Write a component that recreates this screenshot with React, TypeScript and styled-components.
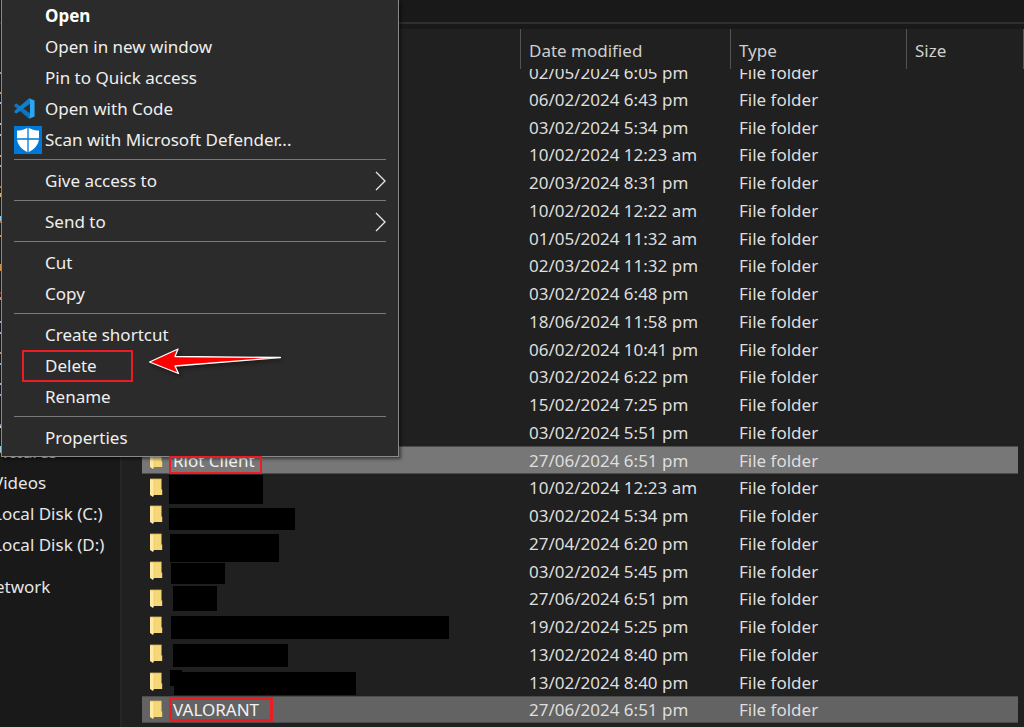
import React from 'react';
import styled, { createGlobalStyle, css } from 'styled-components';

const GlobalStyle = createGlobalStyle`
  *, *::before, *::after { box-sizing: border-box; }
  html, body, #root { min-height: 100vh; }
  body {
    margin: 0;
    background: #202020;
    color: #dedede;
    font-family: "Noto Sans", "Open Sans", sans-serif;
    font-size: 17px;
    line-height: 28px;
    overflow: hidden;
  }
`;

const Window = styled.div`
  position: relative;
  min-height: 100vh;
  display: flex;
  flex-direction: column;
  overflow: hidden;
`;

const Toolbar = styled.header`
  height: 29px;
  padding-top: 22px;
  background: #191919;
`;

const ToolbarLine = styled.div`
  height: 2px;
  background: #2f2f2f;
`;

const Body = styled.div`
  flex: 1;
  display: flex;
`;

const NavPane = styled.nav`
  flex: none;
  width: 122px;
  padding-top: 407px;
  background: #191919;
  border-right: 2px solid #262626;
  overflow: hidden;
`;

const NavLink = styled.a<{ $root?: boolean }>`
  display: block;
  height: 31px;
  line-height: 31px;
  margin-left: ${(p) => (p.$root ? -18 : -7)}px;
  margin-top: ${(p) => (p.$root ? 11 : 0)}px;
  color: #e6e6e6;
  text-decoration: none;
  white-space: nowrap;
`;

const NavIconEdges = styled.svg`
  position: absolute;
  left: 0;
  top: 0;
`;

const FilePane = styled.main`
  flex: 1;
  min-width: 0;
  padding-left: 20px;
`;

const FileTable = styled.table`
  width: 100%;
  table-layout: fixed;
  border-collapse: separate;
  border-spacing: 0;
`;

const Column = styled.col<{ $w?: number }>`
  width: ${(p) => (p.$w ? `${p.$w}px` : 'auto')};
`;

const HeadCell = styled.th<{ $open?: boolean }>`
  height: 40px;
  padding: 4px 0 0 8px;
  border-right: ${(p) => (p.$open ? '0' : '1px solid #535353')};
  text-align: left;
  font-weight: 400;
  color: #cfcfcf;

  &:last-child { padding: 0; }
`;

const Cell = styled.td`
  padding: 0 0 0 8px;
  white-space: nowrap;
  &:last-child { padding: 0; }
`;

const NameCell = styled(Cell)`
  padding: 0;
`;

const Row = styled.tr<{ $tone?: string }>`
  height: 28px;
  line-height: 27px;
  &:nth-child(4n) { height: 27px; }
  ${(p) =>
    p.$tone &&
    css`
      ${Cell}:not(:last-child) {
        background: ${p.$tone};
        box-shadow: inset 0 1px #4c4c4c, inset 0 -1px #4c4c4c;
      }
    `}
`;

const ClippedRow = styled.tr`
  height: 16px;
`;

const ClippedText = styled.div`
  height: 16px;
  line-height: 24px;
  display: flex;
  align-items: flex-end;
  overflow: hidden;
`;

const NameLine = styled.div`
  position: relative;
  display: flex;
  align-items: center;
  height: 27px;
  gap: 10px;
  padding-left: 7px;
  color: #f2f2f2;
`;

const Redaction = styled.span<{ $x: number; $y: number; $w: number; $h: number }>`
  position: absolute;
  left: ${(p) => p.$x}px;
  top: ${(p) => p.$y}px;
  width: ${(p) => p.$w}px;
  height: ${(p) => p.$h}px;
  background: #000;
`;

const Highlight = styled.span<{ $x: number; $y: number; $w: number; $h: number; $thick?: boolean }>`
  position: absolute;
  z-index: 3;
  left: ${(p) => p.$x}px;
  top: ${(p) => p.$y}px;
  width: ${(p) => p.$w}px;
  height: ${(p) => p.$h}px;
  border: ${(p) => (p.$thick ? 3 : 2)}px solid #ed1c24;
`;

const Menu = styled.div`
  position: absolute;
  z-index: 2;
  top: 0;
  left: 1px;
  width: 398px;
  padding: 0 12px 3px;
  background: #2b2b2b;
  border: 1px solid #8a8a8a;
  border-top: 0;
  box-shadow: 2px 2px 3px rgba(0, 0, 0, 0.5);
`;

const MenuItem = styled.button<{ $strong?: boolean }>`
  position: relative;
  display: flex;
  align-items: center;
  width: 100%;
  height: 31px;
  padding: 0;
  border: 0;
  background: none;
  color: ${(p) => (p.$strong ? '#ffffff' : '#efefef')};
  font: inherit;
  font-weight: ${(p) => (p.$strong ? 700 : 400)};
  text-align: left;
  white-space: nowrap;
`;

const MenuIcon = styled.span`
  flex: none;
  display: flex;
  width: 31px;
`;

const MenuLabel = styled.span`
  flex: 1;
`;

const Separator = styled.hr`
  height: 1px;
  margin: 4px 0 5px;
  border: 0;
  background: #7a7a7a;
`;

const ArrowMark = styled.svg`
  position: absolute;
  left: 129px;
  top: -6px;
  z-index: 3;
  filter: drop-shadow(2px 2px 2px rgba(0, 0, 0, 0.45));
`;

const FolderIcon = () => (
  <svg width="14" height="20" viewBox="0 0 14 20" aria-hidden="true">
    <path d="M1 1h11.500v10.500h.7V17H5z" fill="#f5d778" />
    <path d="M1 1h3l1 1.500v14.500l-1 2-3-2z" fill="#ffe8a3" />
    <path d="M5 2v15" stroke="#e9c766" strokeWidth="0.700" />
    <path d="M1 1h11.500" stroke="#d8b24c" strokeWidth="0.800" />
  </svg>
);

const CodeIcon = () => (
  <svg width="21" height="21" viewBox="0 0 100 100" aria-hidden="true">
    <path d="M2 31v8l70 60 4-26L12 26z" fill="#0b76c0" />
    <path d="M72 1 2 62v7l10 5 64-47z" fill="#1080cc" />
    <path d="M72 1 98 12v76L72 99 76 73V27z" fill="#2aa6f2" />
  </svg>
);

const DefenderIcon = () => (
  <svg width="28" height="28" viewBox="0 0 28 28" aria-hidden="true">
    <path d="M0 0h28v28H0z" fill="#0078d7" />
    <path
      d="M14 1.500C11 3.600 7 4.600 3 4.600V12c0 7 5 11.500 11 14.500C20 23.500 25 19 25 12V4.600C21 4.600 17 3.600 14 1.500z"
      fill="#fff"
    />
    <path d="M14 1v26M2 13h24" stroke="#0078d7" strokeWidth="1.300" />
  </svg>
);

const Chevron = () => (
  <svg width="11" height="20" viewBox="0 0 11 20" aria-hidden="true">
    <path d="M1 1l9 9-9 9" fill="none" stroke="#e8e8e8" strokeWidth="1.300" />
  </svg>
);

const Arrow = () => (
  <ArrowMark width="150" height="40" viewBox="0 0 150 40" aria-hidden="true">
    <path
      d="M6.500 18 35 5 32 12.500 137.500 13.500 32 22 35.500 29.500z"
      fill="#ff0000"
      stroke="#fff"
      strokeWidth="1.300"
      strokeLinejoin="round"
    />
  </ArrowMark>
);

// Right edges of the navigation icons that stay visible beside the menu: y, height, colour.
const iconEdges: [number, number, string][] = [
  [72, 2, '#b98f95'], [92, 2, '#c89a72'], [102, 2, '#a9bbe0'], [123, 2, '#c3c3c3'],
  [134, 2, '#a9bbe0'], [155, 2, '#d0a478'], [165, 2, '#8fb0d0'], [186, 2, '#b97a2c'],
  [193, 4, '#e3b169'], [216, 5, '#8fd0ea'], [221, 2, '#b9702c'], [235, 2, '#d09860'],
  [264, 7, '#d9934a'], [292, 2, '#8e3030'], [297, 3, '#d9934a'], [321, 2, '#a0b4c8'],
  [332, 2, '#a9a9e0'], [352, 2, '#c09878'], [363, 2, '#8fa8e0'], [383, 2, '#b8b8c8'],
  [394, 2, '#a0a0d8'], [424, 2, '#b070c0'], [426, 2, '#d0e8d0'], [446, 6, '#8fd0ea'],
];

const NavEdges = () => (
  <NavIconEdges width="1" height="457" viewBox="0 0 1 457" aria-hidden="true">
    {iconEdges.map(([y, h, fill]) => (
      <rect key={y} x="0" y={y} width="1" height={h} fill={fill} />
    ))}
  </NavIconEdges>
);

type Box = [number, number, number, number];
type Entry = { date: string; folder?: boolean; name?: string; tone?: string; black?: Box[]; mark?: Box; thick?: boolean };

const entries: Entry[] = [
  { date: '06/02/2024 6:43 pm' },
  { date: '03/02/2024 5:34 pm' },
  { date: '10/02/2024 12:23 am' },
  { date: '20/03/2024 8:31 pm' },
  { date: '10/02/2024 12:22 am' },
  { date: '01/05/2024 11:32 am' },
  { date: '02/03/2024 11:32 pm' },
  { date: '03/02/2024 6:48 pm' },
  { date: '18/06/2024 11:58 pm' },
  { date: '06/02/2024 10:41 pm' },
  { date: '03/02/2024 6:22 pm' },
  { date: '15/02/2024 7:25 pm' },
  { date: '03/02/2024 5:51 pm' },
  { date: '27/06/2024 6:51 pm', folder: true, name: 'Riot Client', tone: '#777777', mark: [27, 9, 93, 18] },
  { date: '10/02/2024 12:23 am', folder: true, black: [[27, 1, 94, 29]] },
  { date: '03/02/2024 5:34 pm', folder: true, black: [[27, 6, 126, 22]] },
  { date: '27/04/2024 6:20 pm', folder: true, black: [[28, 4, 109, 28]] },
  { date: '03/02/2024 5:45 pm', folder: true, black: [[29, 5, 54, 21]] },
  { date: '27/06/2024 6:51 pm', folder: true, black: [[31, 1, 44, 25]] },
  { date: '19/02/2024 5:25 pm', folder: true, black: [[29, 3, 278, 23]] },
  { date: '13/02/2024 8:40 pm', folder: true, black: [[31, 3, 115, 23]] },
  { date: '13/02/2024 8:40 pm', folder: true, black: [[28, 1, 12, 16], [32, 3, 182, 23]] },
  { date: '27/06/2024 6:51 pm', folder: true, name: 'VALORANT', tone: '#636363', mark: [27, 1, 104, 25], thick: true },
];

const box = ([x, y, w, h]: Box) => ({ $x: x, $y: y, $w: w, $h: h });

type Item = { label: string; strong?: boolean; icon?: React.ReactNode; more?: boolean; marked?: boolean };

const groups: Item[][] = [
  [
    { label: 'Open', strong: true },
    { label: 'Open in new window' },
    { label: 'Pin to Quick access' },
    { label: 'Open with Code', icon: <CodeIcon /> },
    { label: 'Scan with Microsoft Defender...', icon: <DefenderIcon /> },
  ],
  [{ label: 'Give access to', more: true }],
  [{ label: 'Send to', more: true }],
  [{ label: 'Cut' }, { label: 'Copy' }],
  [{ label: 'Create shortcut' }, { label: 'Delete', marked: true }, { label: 'Rename' }],
  [{ label: 'Properties' }],
];

export default function App() {
  return (
    <>
      <GlobalStyle />
      <Window>
        <Toolbar>
          <ToolbarLine />
        </Toolbar>
        <Body>
          <NavPane>
            <NavEdges />
            <NavLink href="#pictures">Pictures</NavLink>
            <NavLink href="#videos">Videos</NavLink>
            <NavLink href="#c">Local Disk (C:)</NavLink>
            <NavLink href="#d">Local Disk (D:)</NavLink>
            <NavLink href="#network" $root>Network</NavLink>
          </NavPane>
          <FilePane>
            <FileTable>
              <colgroup>
                <Column $w={379} />
                <Column $w={210} />
                <Column $w={176} />
                <Column />
                <Column $w={6} />
              </colgroup>
              <thead>
                <tr>
                  <HeadCell />
                  <HeadCell scope="col">Date modified</HeadCell>
                  <HeadCell scope="col">Type</HeadCell>
                  <HeadCell scope="col" $open>Size</HeadCell>
                  <HeadCell />
                </tr>
              </thead>
              <tbody>
                <ClippedRow>
                  <NameCell />
                  <Cell><ClippedText>02/05/2024 6:05 pm</ClippedText></Cell>
                  <Cell><ClippedText>File folder</ClippedText></Cell>
                  <Cell />
                  <Cell />
                </ClippedRow>
                {entries.map((e, i) => (
                  <Row key={i} $tone={e.tone}>
                    <NameCell>
                      {e.folder && (
                        <NameLine>
                          <FolderIcon />
                          {e.name}
                          {e.black?.map((b, n) => <Redaction key={n} {...box(b)} />)}
                          {e.mark && <Highlight {...box(e.mark)} $thick={e.thick} />}
                        </NameLine>
                      )}
                    </NameCell>
                    <Cell>{e.date}</Cell>
                    <Cell>File folder</Cell>
                    <Cell />
                    <Cell />
                  </Row>
                ))}
              </tbody>
            </FileTable>
          </FilePane>
        </Body>
        <Menu role="menu">
          {groups.map((items, g) => (
            <React.Fragment key={g}>
              {g > 0 && <Separator />}
              {items.map((it) => (
                <MenuItem key={it.label} type="button" role="menuitem" $strong={it.strong}>
                  <MenuIcon>{it.icon}</MenuIcon>
                  <MenuLabel>{it.label}</MenuLabel>
                  {it.more && <Chevron />}
                  {it.marked && <Highlight $x={8} $y={0} $w={111} $h={32} />}
                  {it.marked && <Arrow />}
                </MenuItem>
              ))}
            </React.Fragment>
          ))}
        </Menu>
      </Window>
    </>
  );
}
